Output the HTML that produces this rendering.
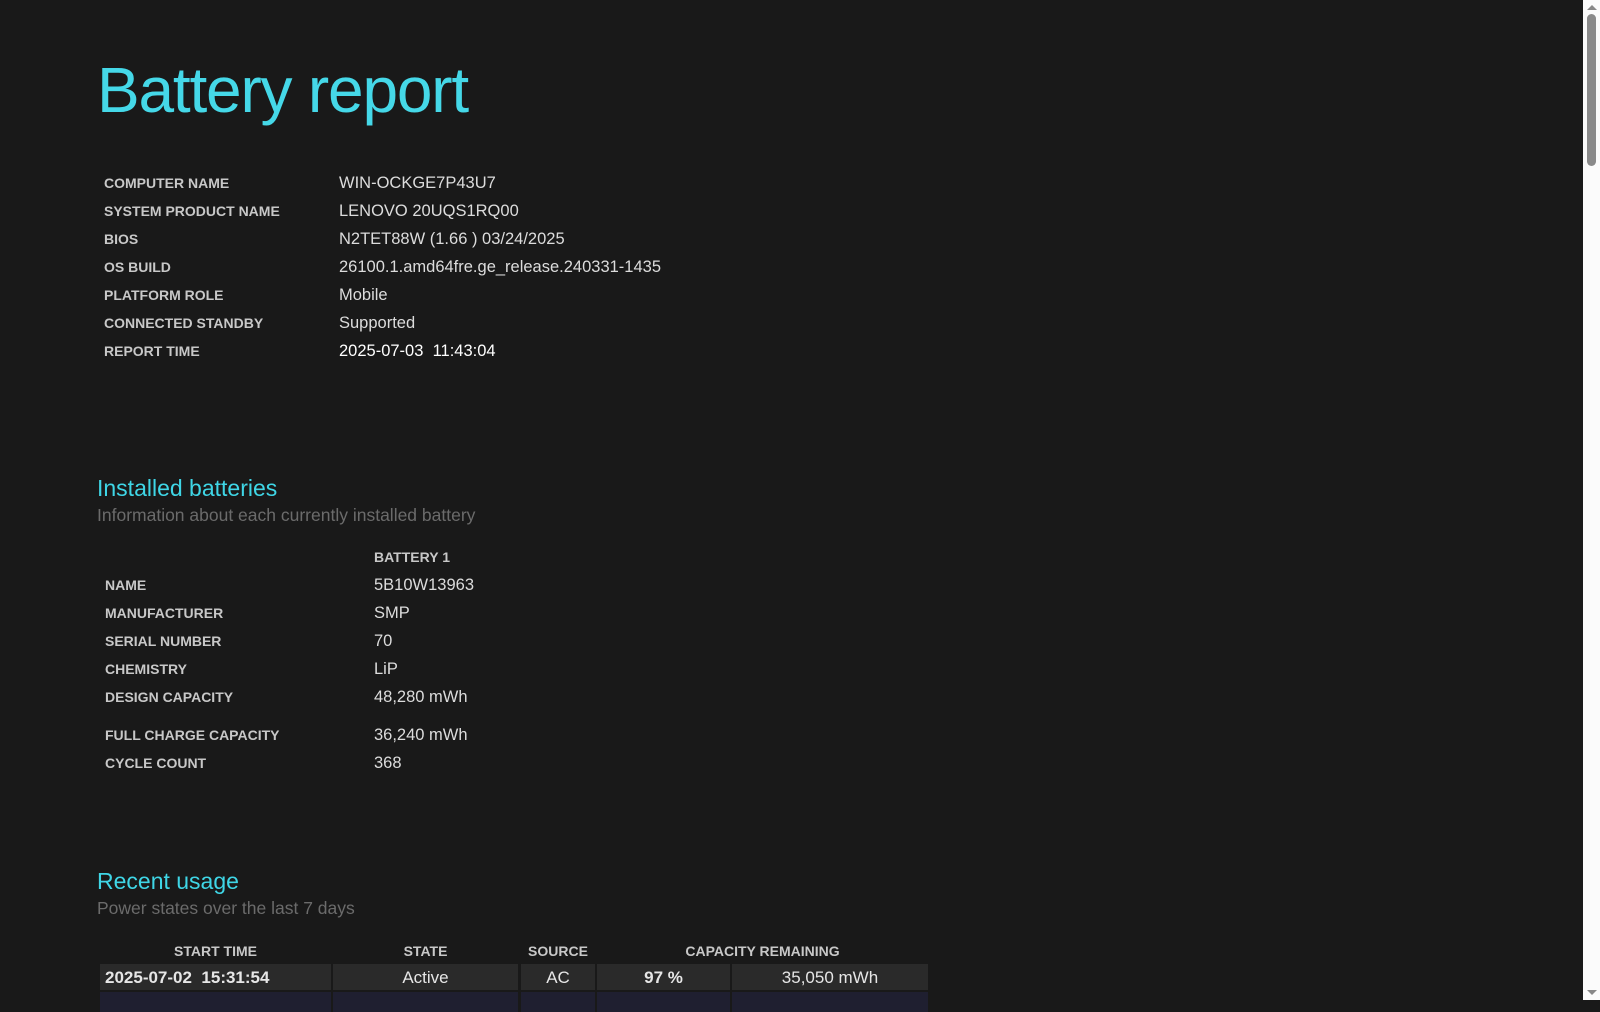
<!DOCTYPE html>
<html><head><meta charset="utf-8"><style>
html,body{margin:0;padding:0;width:1600px;height:1000px;overflow:hidden;background:#191919;font-family:"Liberation Sans",sans-serif;}
.a{position:absolute;white-space:nowrap;}
.t{left:97px;top:50px;font-size:64px;color:#45d8e8;letter-spacing:-1.2px;line-height:80px;}
.l{font-size:14px;font-weight:bold;color:#c8c8c8;line-height:18px;}
.v{font-size:16.5px;color:#dcdcdc;line-height:20px;}
.h{font-size:23px;color:#3fd6e6;line-height:28px;}
.s{font-size:17.5px;color:#6b6b6b;line-height:20px;}
.cell{position:absolute;top:964px;height:26px;background:#2a2a2a;color:#e6e6e6;font-size:17px;line-height:27px;text-align:center}
.cell2{position:absolute;top:992px;height:20px;background:#1f1f30;}
#sb{position:absolute;left:1583px;top:0;width:17px;height:1000px;background:#fbfbfb;}
</style></head><body>
<div class="a t">Battery report</div>
<div class="a l" style="left:104px;top:174px">COMPUTER NAME</div><div class="a v" style="left:339px;top:173px">WIN-OCKGE7P43U7</div>
<div class="a l" style="left:104px;top:202px">SYSTEM PRODUCT NAME</div><div class="a v" style="left:339px;top:201px">LENOVO 20UQS1RQ00</div>
<div class="a l" style="left:104px;top:230px">BIOS</div><div class="a v" style="left:339px;top:229px">N2TET88W (1.66 ) 03/24/2025</div>
<div class="a l" style="left:104px;top:258px">OS BUILD</div><div class="a v" style="left:339px;top:257px">26100.1.amd64fre.ge_release.240331-1435</div>
<div class="a l" style="left:104px;top:286px">PLATFORM ROLE</div><div class="a v" style="left:339px;top:285px">Mobile</div>
<div class="a l" style="left:104px;top:314px">CONNECTED STANDBY</div><div class="a v" style="left:339px;top:313px">Supported</div>
<div class="a l" style="left:104px;top:342px">REPORT TIME</div><div class="a v" style="left:339px;top:341px;color:#fff">2025-07-03&nbsp; 11:43:04</div>

<div class="a h" style="left:97px;top:474px">Installed batteries</div>
<div class="a s" style="left:97px;top:505px">Information about each currently installed battery</div>
<div class="a l" style="left:374px;top:548px">BATTERY 1</div>
<div class="a l" style="left:105px;top:576px">NAME</div><div class="a v" style="left:374px;top:575px">5B10W13963</div>
<div class="a l" style="left:105px;top:604px">MANUFACTURER</div><div class="a v" style="left:374px;top:603px">SMP</div>
<div class="a l" style="left:105px;top:632px">SERIAL NUMBER</div><div class="a v" style="left:374px;top:631px">70</div>
<div class="a l" style="left:105px;top:660px">CHEMISTRY</div><div class="a v" style="left:374px;top:659px">LiP</div>
<div class="a l" style="left:105px;top:688px">DESIGN CAPACITY</div><div class="a v" style="left:374px;top:687px">48,280 mWh</div>
<div class="a l" style="left:105px;top:726px">FULL CHARGE CAPACITY</div><div class="a v" style="left:374px;top:725px">36,240 mWh</div>
<div class="a l" style="left:105px;top:754px">CYCLE COUNT</div><div class="a v" style="left:374px;top:753px">368</div>

<div class="a h" style="left:97px;top:867px">Recent usage</div>
<div class="a s" style="left:97px;top:898px">Power states over the last 7 days</div>
<div class="a l" style="left:100px;width:231px;text-align:center;top:942px">START TIME</div>
<div class="a l" style="left:333px;width:185px;text-align:center;top:942px">STATE</div>
<div class="a l" style="left:521px;width:74px;text-align:center;top:942px">SOURCE</div>
<div class="a l" style="left:597px;width:331px;text-align:center;top:942px">CAPACITY REMAINING</div>
<div class="cell" style="left:100px;width:231px;text-align:left;font-weight:bold;"><span style="padding-left:5px">2025-07-02&nbsp; 15:31:54</span></div>
<div class="cell" style="left:333px;width:185px;">Active</div>
<div class="cell" style="left:521px;width:74px;">AC</div>
<div class="cell" style="left:597px;width:133px;font-weight:bold">97 %</div>
<div class="cell" style="left:732px;width:196px;">35,050 mWh</div>
<div class="cell2" style="left:100px;width:231px"></div><div class="cell2" style="left:333px;width:185px"></div><div class="cell2" style="left:521px;width:74px"></div><div class="cell2" style="left:597px;width:133px"></div><div class="cell2" style="left:732px;width:196px"></div>
<div id="sb"><div style="position:absolute;left:4px;top:5px;width:0;height:0;border-left:5px solid transparent;border-right:5px solid transparent;border-bottom:5px solid #888"></div>
<div style="position:absolute;left:4px;top:14px;width:9px;height:152px;background:#8a8a8a;border-radius:5px"></div>
<div style="position:absolute;left:4px;top:990px;width:0;height:0;border-left:5px solid transparent;border-right:5px solid transparent;border-top:5px solid #888"></div></div>
</body></html>
